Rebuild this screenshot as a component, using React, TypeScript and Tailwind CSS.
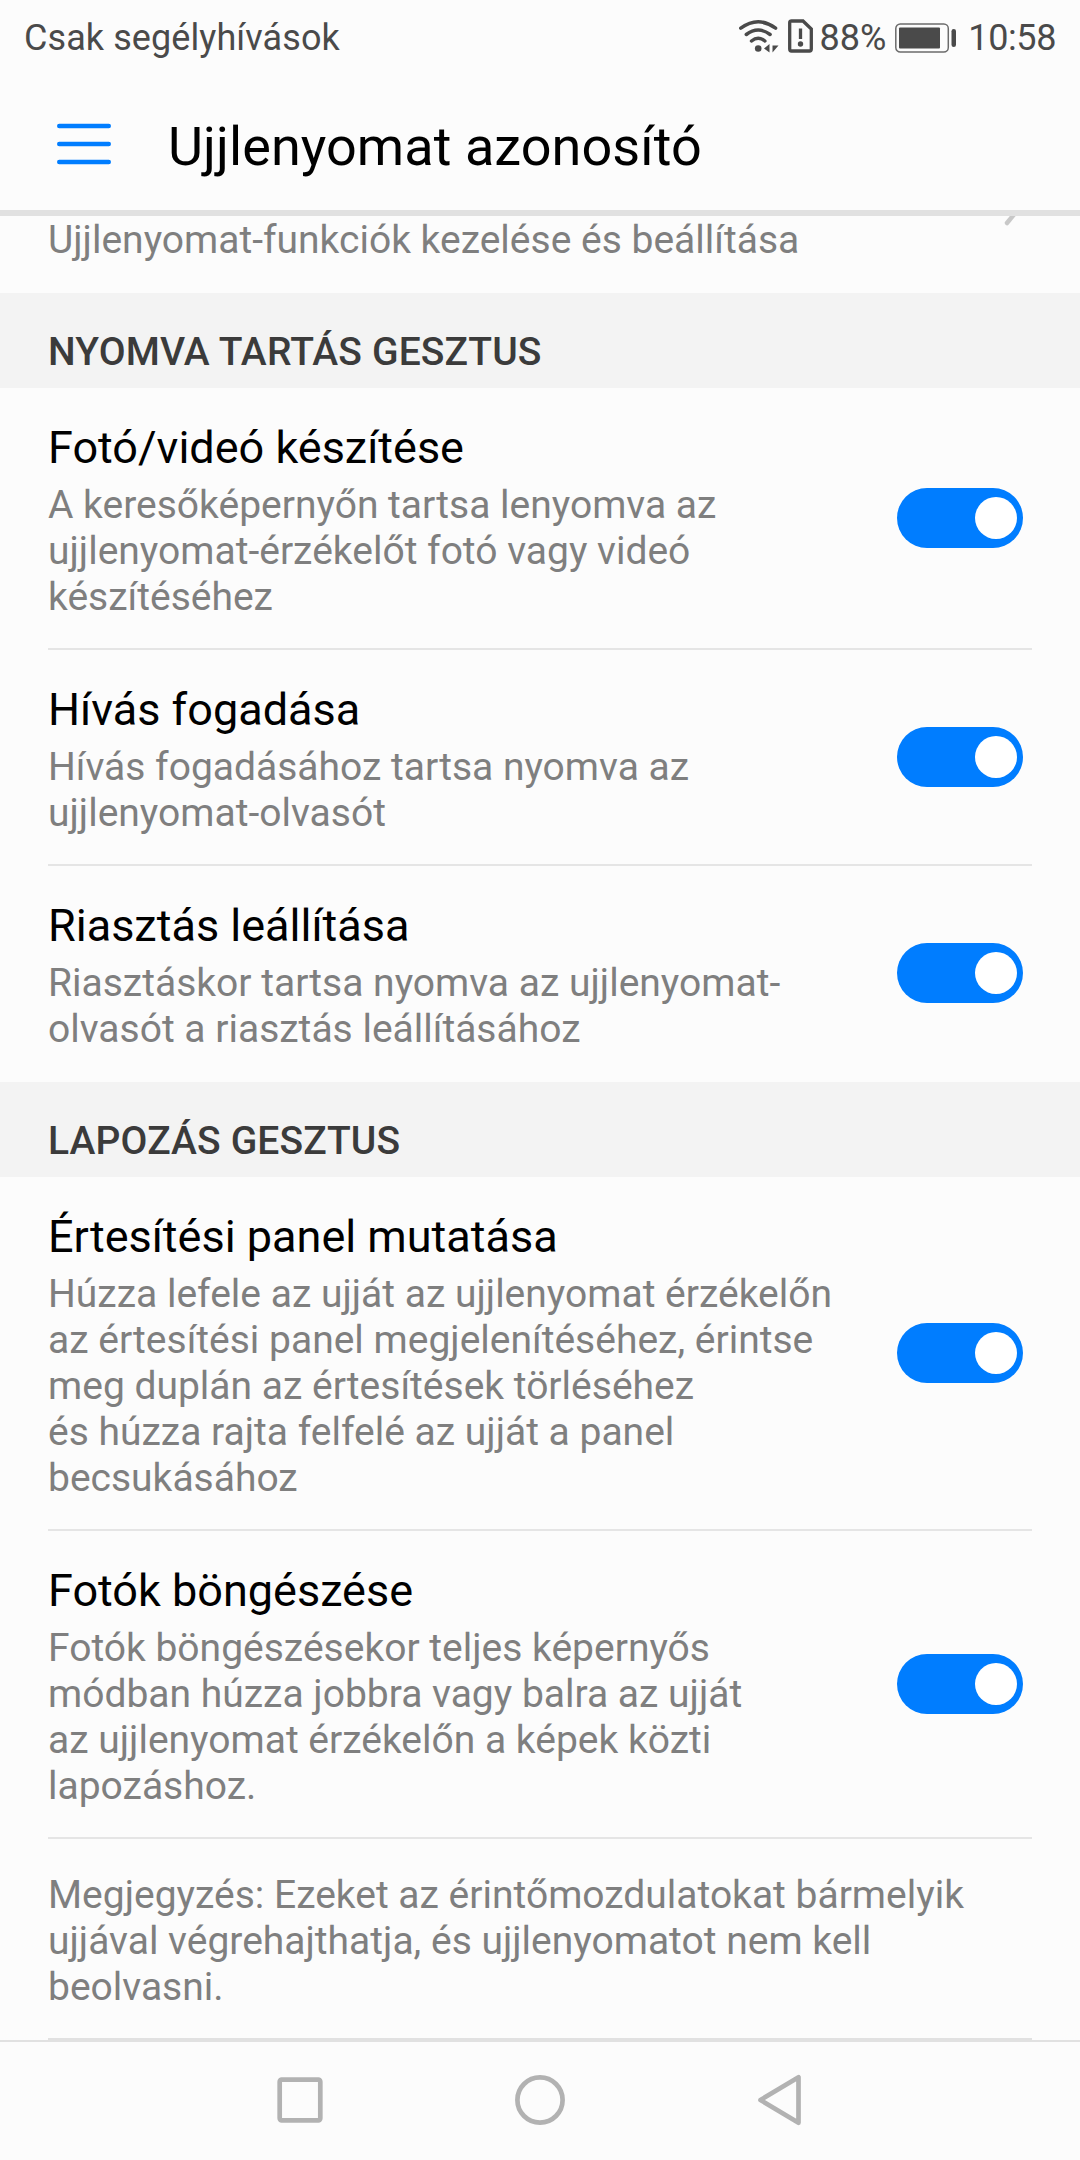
import { useState } from 'react';

interface GestureSetting {
  title: string;
  lines: string[];
}

interface ToggleProps {
  label: string;
}

interface GestureSectionProps {
  title: string;
  settings: GestureSetting[];
  lastDivider?: boolean;
}

const holdGestures: GestureSetting[] = [
  {
    title: 'Fotó/videó készítése',
    lines: ['A keresőképernyőn tartsa lenyomva az', 'ujjlenyomat-érzékelőt fotó vagy videó', 'készítéséhez'],
  },
  {
    title: 'Hívás fogadása',
    lines: ['Hívás fogadásához tartsa nyomva az', 'ujjlenyomat-olvasót'],
  },
  {
    title: 'Riasztás leállítása',
    lines: ['Riasztáskor tartsa nyomva az ujjlenyomat-', 'olvasót a riasztás leállításához'],
  },
];

const slideGestures: GestureSetting[] = [
  {
    title: 'Értesítési panel mutatása',
    lines: [
      'Húzza lefele az ujját az ujjlenyomat érzékelőn',
      'az értesítési panel megjelenítéséhez, érintse',
      'meg duplán az értesítések törléséhez',
      'és húzza rajta felfelé az ujját a panel',
      'becsukásához',
    ],
  },
  {
    title: 'Fotók böngészése',
    lines: [
      'Fotók böngészésekor teljes képernyős',
      'módban húzza jobbra vagy balra az ujját',
      'az ujjlenyomat érzékelőn a képek közti',
      'lapozáshoz.',
    ],
  },
];

const note = [
  'Megjegyzés: Ezeket az érintőmozdulatokat bármelyik',
  'ujjával végrehajthatja, és ujjlenyomatot nem kell',
  'beolvasni.',
];

const StatusBar = () => (
  <div className="flex h-[72px] items-center justify-between pl-6 pr-6 pt-[3px] text-[36px] leading-[42px] text-[#4a4a4a]">
    <span className="tracking-[0.08px]">Csak segélyhívások</span>
    <div className="flex items-center">
      <svg className="mb-1 mr-[9px] h-[34px] w-10" viewBox="0 0 40 34" fill="none" stroke="#4a4a4a" strokeWidth="3.500" strokeLinecap="round">
        <path d="M1.800 9.200Q19.200 -3.600 36.600 9.200" />
        <path d="M7.300 15.500Q19.200 6.500 31.100 15.500" />
        <path d="M12.500 22Q19.200 16.500 25.900 22" />
        <circle cx="19.200" cy="29.500" r="3.300" fill="#4a4a4a" stroke="none" />
        <path d="M25 29.500L30.500 25V33.500ZM33.500 26.500H39.500L33.500 33.500Z" fill="#4a4a4a" stroke="none" />
      </svg>
      <svg className="mb-1 mr-[7px] h-[34px] w-[25px]" viewBox="0 0 25 34" fill="none" stroke="#4a4a4a" strokeWidth="3.300">
        <path d="M1.700 3.500Q1.700 2 3.500 2H15L23.300 10V30Q23.300 32 21.500 32H3.500Q1.700 32 1.700 30Z" />
        <path d="M12.500 9.500V20" />
        <circle cx="12.500" cy="25" r="2.700" fill="#4a4a4a" stroke="none" />
      </svg>
      <span>88%</span>
      <svg className="ml-[9px] mr-[11px] h-[30px] w-[62px]" viewBox="0 0 62 30">
        <rect x="0.800" y="1" width="52.500" height="28" rx="4.500" fill="none" stroke="#6b6b6b" strokeWidth="1.500" />
        <rect x="4" y="4.500" width="41" height="21" rx="1" fill="#4a4a4a" />
        <rect x="56.500" y="6" width="4.500" height="18" rx="2.250" fill="#4a4a4a" />
      </svg>
      <span className="tracking-[-0.4px]">10:58</span>
    </div>
  </div>
);

const Toggle = ({ label }: ToggleProps) => {
  const [on, setOn] = useState(true);
  return (
    <button
      type="button"
      role="switch"
      aria-checked={on}
      aria-label={label}
      onClick={() => setOn(!on)}
      className={`flex h-[60px] w-[126px] shrink-0 items-center rounded-full px-1.5 ${on ? 'justify-end bg-[#007dff]' : 'justify-start bg-gray-300'}`}
    >
      <span className="size-[42px] rounded-full bg-white" />
    </button>
  );
};

const Summary = ({ lines }: { lines: string[] }) => (
  <p className="whitespace-nowrap text-[39px] leading-[46px] text-[#7f7f7f]">
    {lines.map((line) => (
      <span key={line} className="block">
        {line}
      </span>
    ))}
  </p>
);

const GestureSection = ({ title, settings, lastDivider = false }: GestureSectionProps) => (
  <section>
    <h2 className="h-[95px] bg-[#f3f3f3] px-12 pt-[36px] text-[39px] font-medium leading-[46px] tracking-[0.14px] text-[#3b3b3b]">
      {title}
    </h2>
    {settings.map((setting, index) => (
      <div key={setting.title}>
        <div className="flex items-center justify-between pl-12 pr-[57px]">
          <div className="pb-7 pt-[33px]">
            <h3 className="mb-2 text-[45px] leading-[53px] text-black">{setting.title}</h3>
            <Summary lines={setting.lines} />
          </div>
          <Toggle label={setting.title} />
        </div>
        <div className={`mx-12 h-0.5 ${index < settings.length - 1 || lastDivider ? 'bg-[#e5e5e5]' : ''}`} />
      </div>
    ))}
  </section>
);

const NavigationBar = () => (
  <nav className="flex h-[120px] items-center justify-center border-t-2 border-[#e1e1e1] pb-0.5">
    <svg className="h-[60px] w-[240px]" viewBox="0 0 240 60" fill="none" stroke="#b2b2b2" strokeWidth="4.700">
      <rect x="99.700" y="9.700" width="40.600" height="40.600" rx="2" />
    </svg>
    <svg className="h-[60px] w-[240px]" viewBox="0 0 240 60" fill="none" stroke="#b2b2b2" strokeWidth="4.700">
      <circle cx="120" cy="30" r="22.600" />
    </svg>
    <svg className="h-[60px] w-[240px]" viewBox="0 0 240 60" fill="none" stroke="#b2b2b2" strokeWidth="4.700" strokeLinejoin="round">
      <path d="M138.500 7.200V52.800L100.500 30Z" />
    </svg>
  </nav>
);

export default function App() {
  return (
    <div className="flex h-[2160px] w-[1080px] flex-col overflow-hidden bg-[#fcfcfc] font-[Roboto,sans-serif]">
      <StatusBar />
      <header className="flex h-36 items-center border-b-[6px] border-[#e1e1e1] pl-[57px]">
        <svg className="mr-[57px] mt-1.5 h-[42px] w-[54px]" viewBox="0 0 54 42" fill="none" stroke="#007dff" strokeWidth="4.500" strokeLinecap="round">
          <path d="M2.250 3H51.750M2.250 21H51.750M2.250 39H51.750" />
        </svg>
        <h1 className="pt-[11px] text-[54px] leading-[64px] tracking-[0.06px] text-black">Ujjlenyomat azonosító</h1>
      </header>
      <main className="flex-1 overflow-hidden">
        <div className="flex h-[77px] items-start justify-between pl-12 pr-[57px]">
          <div className="pt-px">
            <Summary lines={['Ujjlenyomat-funkciók kezelése és beállítása']} />
          </div>
          <svg className="h-3 w-[21px]" viewBox="0 0 21 12" fill="none" stroke="#c8c8c8" strokeWidth="4.500" strokeLinecap="round">
            <path d="M5 7L14 -4" />
          </svg>
        </div>
        <GestureSection title="NYOMVA TARTÁS GESZTUS" settings={holdGestures} />
        <GestureSection title="LAPOZÁS GESZTUS" settings={slideGestures} lastDivider />
        <div className="px-12">
          <div className="border-b-2 border-[#e1e1e1] pb-[28px] pt-[33px]">
            <Summary lines={note} />
          </div>
        </div>
      </main>
      <NavigationBar />
    </div>
  );
}
